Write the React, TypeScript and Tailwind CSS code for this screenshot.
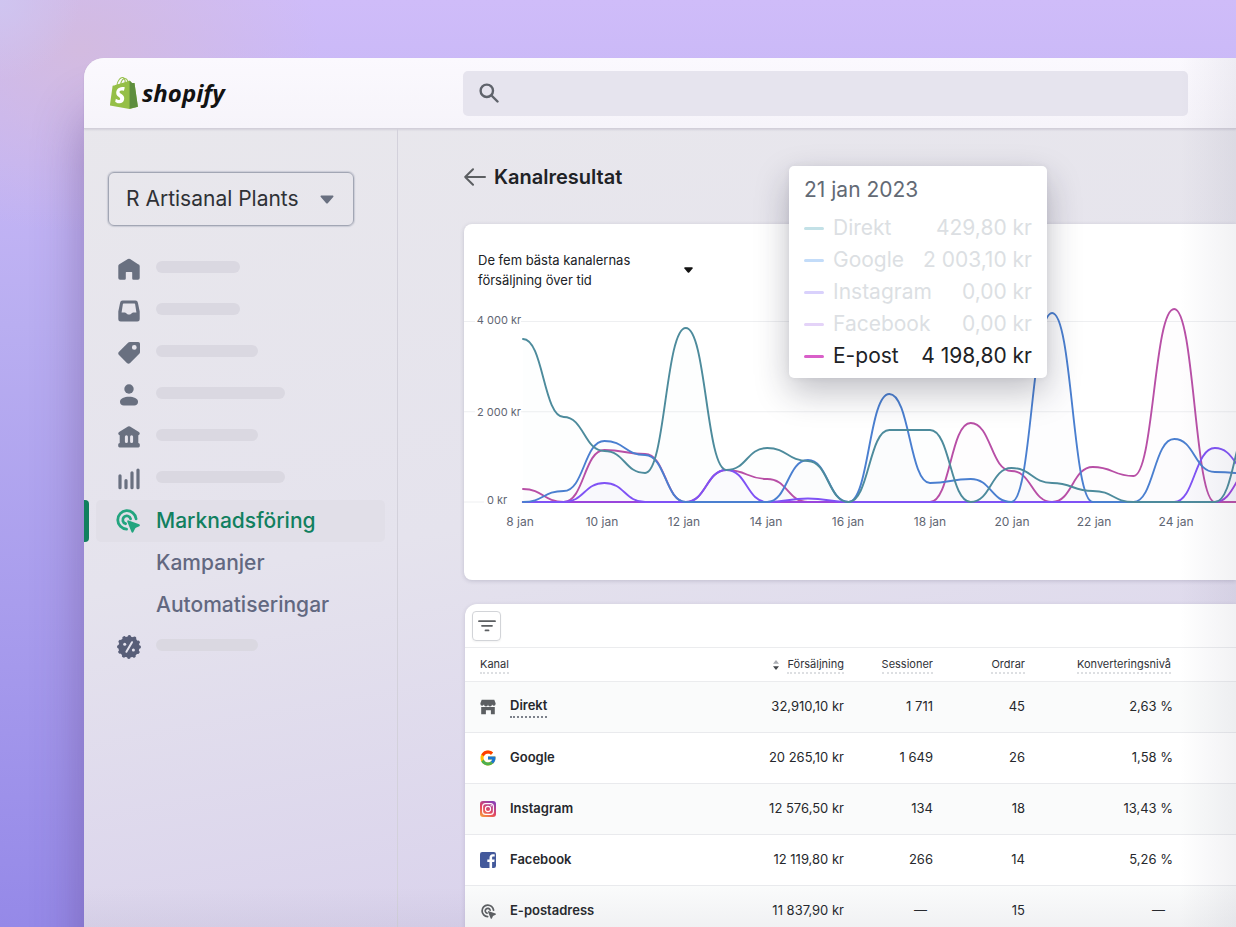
import React from 'react';
import { FcGoogle } from 'react-icons/fc';

interface Series {
  name: string;
  color: string;
  values: number[];
}

// One value per day, 8 jan - 26 jan, in kr
const series: Series[] = [
  { name: 'E-post', color: '#b84fa6', values: [288, 0, 1152, 1064, 0, 709, 510, 0, 0, 0, 0, 1751, 687, 0, 776, 576, 4277, 0, 0] },
  { name: 'Facebook', color: '#9a45dc', values: [0, 0, 0, 0, 0, 0, 0, 0, 0, 0, 0, 0, 0, 0, 0, 0, 0, 0, 780] },
  { name: 'Instagram', color: '#7f52f5', values: [0, 0, 421, 0, 0, 709, 0, 78, 0, 0, 0, 0, 0, 0, 0, 0, 0, 1197, 576] },
  { name: 'Google', color: '#4a7fd0', values: [0, 244, 1352, 1042, 0, 0, 0, 931, 0, 2393, 421, 510, 0, 4188, 0, 0, 1396, 665, 620] },
  { name: 'Direkt', color: '#4d8b9c', values: [3612, 1884, 1130, 643, 3856, 709, 1197, 909, 0, 1596, 1596, 0, 753, 421, 244, 0, 0, 0, 1950] },
];

const xLabels = ['8 jan', '10 jan', '12 jan', '14 jan', '16 jan', '18 jan', '20 jan', '22 jan', '24 jan'];

const tooltipRows = [
  { name: 'Direkt', value: '429,80 kr', line: 'bg-[#c3e1e7]' },
  { name: 'Google', value: '2 003,10 kr', line: 'bg-[#c3dcf9]' },
  { name: 'Instagram', value: '0,00 kr', line: 'bg-[#d9d1fc]' },
  { name: 'Facebook', value: '0,00 kr', line: 'bg-[#e4d3f8]' },
  { name: 'E-post', value: '4 198,80 kr', line: 'bg-[#d95fc9]', active: true },
];

const BASE_Y = 212;
const START_X = 59;
const DAY_WIDTH = 40.7;

const toX = (day: number) => START_X + day * DAY_WIDTH;
const toY = (kr: number) => BASE_Y - (kr * 180.5) / 4000;

const linePath = (values: number[]): string =>
  values
    .map((v, i) => {
      if (i === 0) return `M${toX(0)} ${toY(v)}`;
      const mid = (toX(i - 1) + toX(i)) / 2;
      return `C${mid} ${toY(values[i - 1])} ${mid} ${toY(v)} ${toX(i)} ${toY(v)}`;
    })
    .join(' ');

const areaPath = (values: number[]): string =>
  `${linePath(values)} L${toX(values.length - 1)} ${BASE_Y} L${toX(0)} ${BASE_Y} Z`;

const ShopifyBag = () => (
  <svg viewBox="0 0 109.5 124.5" className="h-8 w-7" aria-hidden="true">
    <path fill="#95bf47" d="M95.9 23.9c-.1-.6-.6-1-1.1-1-.5 0-9.3-.2-9.3-.2s-7.4-7.2-8.1-7.9c-.7-.7-2.2-.5-2.7-.3 0 0-1.4.4-3.7 1.1-.4-1.3-1-2.8-1.8-4.4-2.6-5-6.5-7.7-11.1-7.7-.3 0-.6 0-1 .1-.1-.2-.3-.3-.4-.5-2-2.2-4.6-3.2-7.7-3.1-6 .2-12 4.5-16.8 12.2-3.4 5.4-6 12.2-6.7 17.5-6.9 2.1-11.7 3.6-11.8 3.7-3.5 1.1-3.6 1.2-4 4.5C9.4 40.4 0 111.2 0 111.2l76.4 13.2 33.1-8.2S96 24.5 95.9 23.9zM67.2 16.8c-1.8.5-3.8 1.2-5.9 1.8 0-3-.4-7.3-1.8-10.9 4.5.9 6.8 6 7.7 9.1zM57.2 19.9c-4 1.2-8.4 2.6-12.8 3.9 1.2-4.7 3.6-9.4 6.4-12.5 1.1-1.1 2.6-2.4 4.3-3.2 1.8 3.6 2.2 8.5 2.1 11.8zM49.1 4c1.4 0 2.6.3 3.6.9-1.6.9-3.2 2.1-4.7 3.7-3.8 4.1-6.7 10.5-7.9 16.6-3.6 1.1-7.2 2.2-10.5 3.2C31.7 18.8 39.8 4.2 49.1 4z" />
    <path fill="#5e8e3e" d="M94.8 22.9c-.5 0-9.3-.2-9.3-.2s-7.4-7.2-8.1-7.9c-.3-.3-.6-.4-1-.5v109.7l33.1-8.2S96 24.5 95.9 23.9c-.1-.6-.6-1-1.1-1z" />
    <path fill="#fff" d="M58 39.9l-3.8 14.4s-4.3-2-9.4-1.6c-7.5.5-7.5 5.2-7.5 6.4.4 6.4 17.3 7.8 18.3 22.9.7 11.9-6.3 20-16.4 20.6-12.2.8-18.9-6.4-18.9-6.4l2.6-11s6.7 5.1 12.1 4.7c3.5-.2 4.8-3.1 4.7-5.1-.5-8.4-14.3-7.9-15.2-21.7-.7-11.6 6.9-23.4 23.7-24.4 6.5-.5 9.8 1.2 9.8 1.2z" />
  </svg>
);

const HomeIcon = () => (
  <svg viewBox="0 0 22 22" className="size-[22px]" fill="currentColor" aria-hidden="true">
    <path d="M9.9 1a2 2 0 0 1 2.2 0l8 5.2A2 2 0 0 1 21.700 8v12a1.700 1.700 0 0 1-1.700 1.700h-4.500a1.300 1.300 0 0 1-1.300-1.300v-5.800a.6.6 0 0 0-.6-.6H8.400a.6.6 0 0 0-.6.6v5.800a1.300 1.300 0 0 1-1.300 1.300H2A1.700 1.700 0 0 1 .3 20V8a2 2 0 0 1 1-1.800z" />
  </svg>
);

const InboxIcon = () => (
  <svg viewBox="0 0 22 22" className="size-[22px]" fill="currentColor" fillRule="evenodd" aria-hidden="true">
    <path d="M4.600.6A2.500 2.500 0 0 0 2.100 2.700L.3 11.500v7.800A2.300 2.300 0 0 0 2.600 21.600h16.800a2.300 2.300 0 0 0 2.300-2.300v-7.800L19.900 2.700A2.500 2.500 0 0 0 17.400.6zM5.600 3.400h10.800a.7.7 0 0 1 .7.6l1.300 8.400h-3.200c-.5 0-.9.3-1.200.7-.6.900-1.400 1.500-3 1.500s-2.400-.6-3-1.500c-.3-.4-.7-.7-1.200-.7H3.600L4.900 4a.7.7 0 0 1 .7-.6z" />
  </svg>
);

const TagIcon = () => (
  <svg viewBox="0 0 22 22" className="size-[22px]" fill="currentColor" fillRule="evenodd" aria-hidden="true">
    <path d="M10.300.6A2.500 2.500 0 0 1 12 0h8.200A1.800 1.800 0 0 1 22 1.800V10a2.500 2.500 0 0 1-.7 1.700l-9.200 9.200a2.300 2.300 0 0 1-3.200 0L1 13a2.300 2.300 0 0 1 0-3.200zM16.300 7.800a2.400 2.400 0 1 0 0-4.800 2.400 2.400 0 0 0 0 4.800z" />
  </svg>
);

const PersonIcon = () => (
  <svg viewBox="0 0 22 22" className="size-[22px]" fill="currentColor" aria-hidden="true">
    <circle cx="11" cy="5" r="4.700" />
    <path d="M2 17.600C2 14.500 6.500 12.700 11 12.700s9 1.800 9 4.900v.4c0 2.100-1.600 3.600-3.700 3.600H5.700C3.600 21.600 2 20.100 2 18z" />
  </svg>
);

const BankIcon = () => (
  <svg viewBox="0 0 22 22" className="size-[22px]" fill="currentColor" fillRule="evenodd" aria-hidden="true">
    <path d="M10 .6a2 2 0 0 1 2 0l8.900 5.400c1.400.9 1 3-.6 3.200v7.700a1.500 1.500 0 0 1 1.500 1.500v1.700a1.400 1.400 0 0 1-1.400 1.400H1.600A1.400 1.400 0 0 1 .2 20.100v-1.700a1.500 1.500 0 0 1 1.500-1.500V9.200C.1 9-.3 6.900 1.100 6zM8.400 9.200a1.500 1.500 0 0 0-1.500 1.500v4.800a1.500 1.500 0 0 0 3 0v-4.800a1.500 1.500 0 0 0-1.500-1.500zM13.600 9.200a1.500 1.500 0 0 0-1.500 1.500v4.800a1.500 1.500 0 0 0 3 0v-4.800a1.500 1.500 0 0 0-1.500-1.500z" />
  </svg>
);

const BarsIcon = () => (
  <svg viewBox="0 0 22 22" className="size-[22px]" stroke="currentColor" strokeWidth="3.2" strokeLinecap="round" aria-hidden="true">
    <path d="M2 7.800v11.900M8 12.600v7.100M14 4.800v14.900M20 2v17.700" />
  </svg>
);

const TargetIcon = ({ className }: { className: string }) => (
  <svg viewBox="0 0 24 24" className={className} fill="none" aria-hidden="true">
    <path d="M10.600 20.100A9.200 9.200 0 1 1 20.100 9.800" stroke="currentColor" strokeWidth="2.800" strokeLinecap="round" />
    <path d="M9.600 14.700A4 4 0 1 1 14.600 9.800" stroke="currentColor" strokeWidth="2.800" strokeLinecap="round" />
    <path fill="currentColor" d="M11.300 12.700a1 1 0 0 1 1.300-1.300l10.600 3.900c.9.300.9 1.500.1 1.900l-3.400 1.600a2 2 0 0 0-.9.900l-1.600 3.400c-.4.800-1.600.8-1.900-.1z" />
  </svg>
);

const DiscountIcon = () => (
  <svg viewBox="0 0 24 24" className="size-6 text-[#585e78]" aria-hidden="true">
    <circle cx="12" cy="12" r="10.600" fill="currentColor" />
    <circle cx="12" cy="12" r="10.300" fill="none" stroke="currentColor" strokeWidth="3.400" strokeDasharray="0.1 5.293" strokeLinecap="round" />
    <path d="M15 7.200l-5.600 9.600" stroke="#e5e3ee" strokeWidth="2" strokeLinecap="round" />
    <circle cx="7.700" cy="9.200" r="1.500" fill="#e5e3ee" />
    <circle cx="16.400" cy="15" r="1.500" fill="#e5e3ee" />
  </svg>
);

const StoreIcon = () => (
  <svg viewBox="0 0 16 16" className="size-4" fill="#5c5f62" aria-hidden="true">
    <path d="M1.700.7h12.600l1.300 3.600v.6a1.900 1.900 0 0 1-3.600.7 2 2 0 0 1-4 0 2 2 0 0 1-4 0A1.900 1.900 0 0 1 .4 4.900v-.6z" />
    <path d="M1.200 8h13.600v7.300h-3.900v-4.100H5.900v4.100H1.200z" />
  </svg>
);

const InstagramIcon = () => (
  <svg viewBox="0 0 16 16" className="size-4" fill="none" aria-hidden="true">
    <defs>
      <linearGradient id="ig" x1="0.1" y1="1" x2="0.700" y2="0">
        <stop offset="0" stopColor="#f9a13c" />
        <stop offset="0.450" stopColor="#e4485f" />
        <stop offset="1" stopColor="#8e3fb4" />
      </linearGradient>
    </defs>
    <rect width="16" height="16" rx="3" fill="url(#ig)" />
    <rect x="2.600" y="2.600" width="10.800" height="10.800" rx="3" stroke="#fff" strokeWidth="1.100" />
    <circle cx="8" cy="8" r="2.600" stroke="#fff" strokeWidth="1.100" />
    <circle cx="11.200" cy="4.800" r="0.700" fill="#fff" />
  </svg>
);

const FacebookIcon = () => (
  <svg viewBox="0 0 16 16" className="size-4" aria-hidden="true">
    <rect width="16" height="16" rx="2.200" fill="#43599b" />
    <path fill="#fff" d="M9.500 16V9.900H7.300V7.500h2.200V5.700c0-2.200 1.300-3.400 3.300-3.400.9 0 1.700.1 1.900.1v2.200h-1.300c-1.100 0-1.300.5-1.300 1.200v1.700h2.500l-.3 2.400h-2.200V16z" />
  </svg>
);

const placeholderItems = [
  { label: 'Hem', icon: <HomeIcon />, bar: 'w-[84px]' },
  { label: 'Ordrar', icon: <InboxIcon />, bar: 'w-[84px]' },
  { label: 'Produkter', icon: <TagIcon />, bar: 'w-[102px]' },
  { label: 'Kunder', icon: <PersonIcon />, bar: 'w-[129px]' },
  { label: 'Ekonomi', icon: <BankIcon />, bar: 'w-[102px]' },
  { label: 'Analys', icon: <BarsIcon />, bar: 'w-[129px]' },
];

const channels = [
  { name: 'Direkt', icon: <StoreIcon />, sales: '32,910,10 kr', sessions: '1 711', orders: '45', rate: '2,63 %', underline: true },
  { name: 'Google', icon: <FcGoogle className="size-[18px]" />, sales: '20 265,10 kr', sessions: '1 649', orders: '26', rate: '1,58 %' },
  { name: 'Instagram', icon: <InstagramIcon />, sales: '12 576,50 kr', sessions: '134', orders: '18', rate: '13,43 %' },
  { name: 'Facebook', icon: <FacebookIcon />, sales: '12 119,80 kr', sessions: '266', orders: '14', rate: '5,26 %' },
  { name: 'E-postadress', icon: <TargetIcon className="size-[15px] text-[#5c5f62]" />, sales: '11 837,90 kr', sessions: '—', orders: '15', rate: '—' },
];

const PlaceholderItem = ({ label, icon, bar }: { label: string; icon: React.ReactNode; bar: string }) => (
  <li>
    <a href="#" aria-label={label} className="flex h-[42px] items-center pl-[33px] text-[#697080]">
      <span className="flex w-6 justify-center">{icon}</span>
      <span className={`mb-1 ml-[15px] h-3 rounded-full bg-[#dad8e1] ${bar}`} />
    </a>
  </li>
);

const Sidebar = () => (
  <nav className="w-[314px] shrink-0 border-r border-[#d3d1db] pt-[43px]">
    <div className="relative ml-6 w-[246px]">
      <select
        aria-label="Butik"
        className="h-[54px] w-full appearance-none rounded-md border border-[#a2a6b4] bg-transparent pl-[17px] text-[21px] text-[#2f3136] shadow-[0_0_1px_1px_rgba(150,155,172,0.35)]"
      >
        <option>R Artisanal Plants</option>
      </select>
      <svg viewBox="0 0 14 9" className="pointer-events-none absolute top-[23px] right-5 h-[9px] w-[14px]" aria-hidden="true">
        <path fill="#697080" d="M1.500.5h11c.9 0 1.300 1 .7 1.600L8 8a1.400 1.400 0 0 1-2 0L.8 2.100C.2 1.500.6.5 1.500.5z" />
      </svg>
    </div>
    <ul className="mt-[22px]">
      {placeholderItems.map((item) => (
        <PlaceholderItem key={item.label} {...item} />
      ))}
      <li className="flex items-stretch">
        <span className="w-[5px] rounded-r-[4px] bg-[#11805f]" />
        <a href="#" aria-current="page" className="mr-3 ml-[7px] flex h-[42px] flex-1 items-center rounded-[5px] bg-[#e1dfe8] pl-5 text-[21px] font-medium text-[#11805f]">
          <TargetIcon className="mr-4 size-6 text-[#23a57f]" />
          Marknadsföring
        </a>
      </li>
      {['Kampanjer', 'Automatiseringar'].map((label) => (
        <li key={label}>
          <a href="#" className="flex h-[42px] items-center pl-[72px] text-[21px] font-medium text-[#626880]">{label}</a>
        </li>
      ))}
      <PlaceholderItem label="Rabatter" icon={<DiscountIcon />} bar="w-[102px]" />
    </ul>
  </nav>
);

const SalesChart = () => (
  <svg className="block h-[250px] w-full" role="img" aria-label="Försäljning per kanal över tid">
    {[0, 2000, 4000].map((kr) => (
      <line key={kr} x1="0" x2="100%" y1={toY(kr)} y2={toY(kr)} stroke="#eeeff1" />
    ))}
    <rect x="11" y="20" width="46" height="20" fill="#fff" />
    <rect x="11" y="112" width="46" height="20" fill="#fff" />
    <rect x="20" y="200" width="37" height="20" fill="#fff" />
    <g fontSize="11" fill="#5f6673" textAnchor="middle">
      <text x="35" y="34">4 000 kr</text>
      <text x="35" y="126">2 000 kr</text>
      <text x="33" y="214">0 kr</text>
    </g>
    {series.map((s) => (
      <path key={s.name} d={areaPath(s.values)} fill={s.color} fillOpacity="0.012" />
    ))}
    {series.map((s) => (
      <path key={s.name} d={linePath(s.values)} fill="none" stroke={s.color} strokeWidth="1.900" strokeLinecap="round" />
    ))}
    <g fontSize="12" fill="#5f6673" textAnchor="middle">
      {xLabels.map((label, i) => (
        <text key={label} x={56 + i * 82} y="236">{label}</text>
      ))}
    </g>
  </svg>
);

const ChartTooltip = () => (
  <div role="tooltip" className="absolute -top-[58px] left-[325px] w-[258px] rounded-[5px] bg-white px-[15px] pt-2 pb-[6px] text-[21px] shadow-[0_14px_34px_rgba(30,30,50,0.28),0_0_6px_rgba(30,30,50,0.06)]">
    <p className="mb-[6px] leading-8 text-[#636a75]">21 jan 2023</p>
    <ul>
      {tooltipRows.map((row) => (
        <li key={row.name} className={`flex h-8 items-center whitespace-nowrap ${row.active ? 'text-[#202226]' : 'text-[#dcdfe3]'}`}>
          <span className={`mr-[9px] h-[3px] w-5 shrink-0 rounded-full ${row.line}`} />
          {row.name}
          <span className="ml-auto">{row.value}</span>
        </li>
      ))}
    </ul>
  </div>
);

const headLabel = 'border-b-2 border-dotted border-[#dddfe2] pb-px';

const ChannelTable = () => (
  <section className="mt-6 ml-px rounded-tl-xl bg-white shadow-[0_1px_4px_rgba(40,40,70,0.15)]">
    <div className="flex h-[43px] items-center pl-[7px]">
      <button type="button" aria-label="Filtrera" className="flex h-[30px] w-[29px] items-center justify-center rounded-[4px] border border-[#d2d4d8] shadow-xs">
        <svg viewBox="0 0 18 12" className="h-3 w-[18px]" stroke="#5c5f62" strokeWidth="1.800" strokeLinecap="round" aria-hidden="true">
          <path d="M1 1.200h16M4 5.800h10M7.500 10.400h3" />
        </svg>
      </button>
    </div>
    <table className="w-full table-fixed text-[13px] text-[#26282c]">
      <colgroup>
        <col className="w-[240px]" />
        <col className="w-[139px]" />
        <col className="w-[89px]" />
        <col className="w-[92px]" />
        <col className="w-[148px]" />
        <col />
      </colgroup>
      <thead className="text-[11px] text-[#303237]">
        <tr className="h-[34px] border-y border-[#ebecee] text-right">
          <th scope="col" className="pl-[15px] text-left font-normal"><span className={headLabel}>Kanal</span></th>
          <th scope="col" aria-sort="descending" className="font-normal">
            <button type="button">
              <svg viewBox="0 0 6 10" className="mr-2 inline h-[10px] w-[6px]" aria-hidden="true">
                <path fill="#a9acb2" d="M3 0l3 3.800H0z" />
                <path fill="#44474c" d="M3 10l3-3.800H0z" />
              </svg>
              <span className={headLabel}>Försäljning</span>
            </button>
          </th>
          <th scope="col" className="font-normal"><span className={headLabel}>Sessioner</span></th>
          <th scope="col" className="font-normal"><span className={headLabel}>Ordrar</span></th>
          <th scope="col" className="pr-[2px] font-normal"><span className={headLabel}>Konverteringsnivå</span></th>
          <td />
        </tr>
      </thead>
      <tbody>
        {channels.map((c) => (
          <tr key={c.name} className="h-[51px] border-b border-[#e9eaed] text-right odd:bg-[#fafbfb]">
            <th scope="row" className="text-left font-semibold">
              <div className="flex items-center pl-[14px]">
                <span className="mr-[13px] flex w-[18px] justify-center">{c.icon}</span>
                <span className={c.underline ? 'border-b-2 border-dotted border-[#7d828b] pb-px' : ''}>{c.name}</span>
              </div>
            </th>
            <td>{c.sales}</td>
            <td><span className={c.sessions === '—' ? 'pr-[6px]' : ''}>{c.sessions}</span></td>
            <td>{c.orders}</td>
            <td><span className={c.rate === '—' ? 'pr-2' : ''}>{c.rate}</span></td>
            <td />
          </tr>
        ))}
      </tbody>
    </table>
  </section>
);

export default function App() {
  return (
    <div className="h-screen overflow-hidden bg-[radial-gradient(circle_at_0_0,#cfc5f0_0,transparent_80px),radial-gradient(ellipse_at_80px_50px,#d3bbe0_0,transparent_240px),linear-gradient(to_bottom,#cfbcf9_0,#b9aef1_35%,#a99ded_65%,#9589e8_100%)] pt-[58px] pl-[84px] font-['Inter',sans-serif]">
      <div className="relative flex h-full flex-col rounded-tl-[20px] bg-[linear-gradient(170deg,#e9e8ec_0%,#e5e3ed_50%,#d6cdec_100%)] shadow-[0_56px_50px_rgba(80,50,110,0.42)]">
        <header className="flex h-[71px] shrink-0 items-center rounded-tl-[20px] border-b border-[#d2cfd9] bg-linear-to-b from-[#fbf9fe] to-[#f6f4fa] pr-12 shadow-[0_1px_2px_rgba(60,50,90,0.12)]">
          <a href="#" className="flex w-[379px] shrink-0 items-center gap-1 pl-[26px] text-[#121212]">
            <ShopifyBag />
            <span className="font-['Open_Sans',sans-serif] text-2xl leading-8 font-bold italic">shopify</span>
          </a>
          <label className="flex h-[45px] flex-1 items-center rounded-[5px] bg-[#e6e4ee] pl-4">
            <svg viewBox="0 0 20 20" className="size-5" fill="none" stroke="#5f636b" strokeWidth="2.400" strokeLinecap="round" aria-hidden="true">
              <circle cx="7.800" cy="7.800" r="6.200" />
              <path d="M12.500 12.500l6 6" />
            </svg>
            <input type="search" aria-label="Sök" className="ml-3 flex-1 bg-transparent outline-none" />
          </label>
        </header>

        <div className="flex min-h-0 flex-1">
          <Sidebar />
          <main className="min-w-0 flex-1 pt-[33px] pl-[66px]">
            <div className="flex h-[30px] items-center gap-2">
              <a href="#" aria-label="Tillbaka">
                <svg viewBox="0 0 22 18" className="h-[18px] w-[22px]" fill="none" stroke="#5c5f62" strokeWidth="2" strokeLinecap="round" strokeLinejoin="round" aria-hidden="true">
                  <path d="M21 9H1.200M9 1.200L1.200 9 9 16.800" />
                </svg>
              </a>
              <h1 className="text-xl font-semibold text-[#202226]">Kanalresultat</h1>
            </div>

            <section className="relative mt-8 rounded-l-lg bg-white pt-[26px] pb-10 shadow-[0_1px_4px_rgba(40,40,70,0.18)]">
              <button type="button" className="ml-[14px] flex w-[215px] items-center justify-between text-left text-[13px] leading-5 text-[#202226]">
                <span className="w-[170px]">De fem bästa kanalernas försäljning över tid</span>
                <svg viewBox="0 0 9 6" className="h-[6px] w-[9px]" aria-hidden="true">
                  <path fill="#121212" d="M1 .2h7c.7 0 1 .7.600 1.200L5.200 5.500a1 1 0 0 1-1.400 0L.4 1.400C0 .9.3.2 1 .2z" />
                </svg>
              </button>
              <SalesChart />
              <ChartTooltip />
            </section>

            <ChannelTable />
          </main>
        </div>

        <div className="pointer-events-none absolute inset-y-0 right-0 w-[56px] bg-linear-to-l from-[#5a5a78]/8 to-transparent" />
        <div className="pointer-events-none absolute inset-x-0 bottom-0 h-10 bg-linear-to-t from-[#5a5a78]/6 to-transparent" />
      </div>
    </div>
  );
}
